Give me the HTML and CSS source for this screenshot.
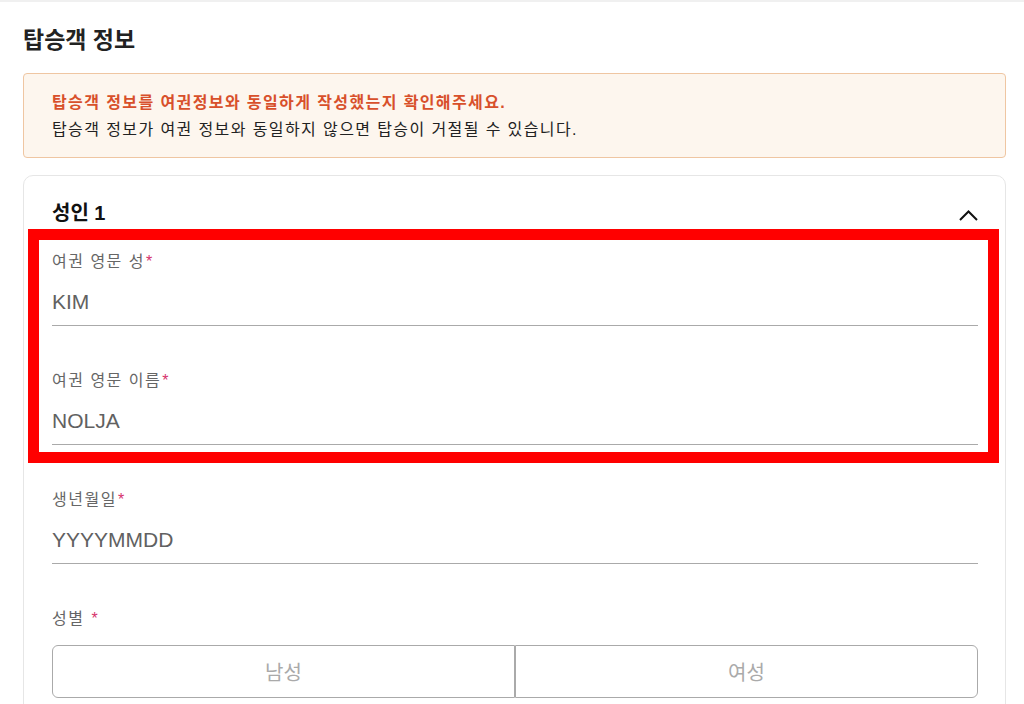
FILE: index.html
```html
<!DOCTYPE html>
<html lang="ko">
<head>
    <meta charset="UTF-8">
    <meta name="viewport" content="width=device-width, initial-scale=1.0">
    <title>탑승객 정보</title>
    <link rel="stylesheet" href="styles.css">
</head>
<body>
    <div class="page">
        <h2 class="section-title">탑승객 정보</h2>

        <div class="notice">
            <p class="notice-warn">탑승객 정보를 여권정보와 동일하게 작성했는지 확인해주세요.</p>
            <p class="notice-text">탑승객 정보가 여권 정보와 동일하지 않으면 탑승이 거절될 수 있습니다.</p>
        </div>

        <div class="card">
            <div class="card-header">
                <h3 class="card-title">성인 1</h3>
                <svg class="chevron" width="19" height="11" viewBox="0 0 19 11">
                    <polyline points="1,10 9.5,1.5 18,10" fill="none" stroke="#111" stroke-width="2"/>
                </svg>
            </div>

            <div class="highlight">
                <div class="field">
                    <label class="field-label" for="lastName">여권 영문 성<span class="req">*</span></label>
                    <input class="field-input" type="text" id="lastName" value="KIM">
                </div>
                <div class="field">
                    <label class="field-label" for="firstName">여권 영문 이름<span class="req">*</span></label>
                    <input class="field-input" type="text" id="firstName" value="NOLJA">
                </div>
            </div>

            <div class="field">
                <label class="field-label" for="birth">생년월일<span class="req">*</span></label>
                <input class="field-input" type="text" id="birth" placeholder="YYYYMMDD">
            </div>

            <div class="field">
                <span class="field-label gender-label">성별 <span class="req">*</span></span>
                <div class="gender-group">
                    <button class="gender-btn">남성</button>
                    <button class="gender-btn">여성</button>
                </div>
            </div>
        </div>
    </div>
</body>
</html>
```

FILE: styles.css
```css
body {
    margin: 0;
    background-color: #fff;
    font-family: "Liberation Sans", "Noto Sans CJK KR", sans-serif;
    color: #222;
}
.page {
    border-top: 2px solid #f0f0f0;
    padding: 0 18px 0 23px;
}
.section-title {
    margin: 24px 0 0;
    font-size: 23px;
    line-height: 28px;
    font-weight: bold;
    color: #222;
}
.notice {
    margin-top: 19px;
    padding: 15px 28px 14px;
    background-color: #fdf6ee;
    border: 1px solid #efc6a2;
    border-radius: 4px;
}
.notice p {
    margin: 0;
    font-size: 16px;
    line-height: 27px;
    letter-spacing: 1.4px;
}
.notice-warn {
    color: #d8502b;
    font-weight: bold;
}
.notice-text {
    color: #222;
}
.card {
    margin-top: 17px;
    padding: 0 27px 0 28px;
    border: 1px solid #e6e6e6;
    border-radius: 10px;
}
.card-header {
    display: flex;
    justify-content: space-between;
    align-items: center;
    padding-top: 24px;
    margin-bottom: 25px;
}
.card-title {
    margin: 0;
    font-size: 20px;
    line-height: 26px;
    font-weight: bold;
    color: #111;
}
.chevron {
    margin-top: 4px;
}
.highlight {
    position: relative;
}
.highlight::before {
    content: "";
    position: absolute;
    top: -22px;
    left: -24px;
    right: -21px;
    bottom: -18px;
    border: 11px solid #ff0000;
    pointer-events: none;
}
.field {
    margin-bottom: 44px;
}
.field-label {
    display: block;
    font-size: 16px;
    line-height: 21px;
    letter-spacing: 1.5px;
    color: #666;
}
.req {
    color: #d6336c;
    margin-left: 1px;
}
.field-input {
    display: block;
    width: 100%;
    box-sizing: border-box;
    margin-top: 8px;
    height: 46px;
    padding: 0 0 1px;
    border: none;
    border-bottom: 1px solid #aaa;
    font-family: "Liberation Sans", "Noto Sans CJK KR", sans-serif;
    font-size: 21px;
    color: #616161;
    background: transparent;
    outline: none;
}
.field-input::placeholder {
    color: #616161;
}
.gender-label {
    margin-bottom: 16px;
}
.gender-group {
    display: flex;
}
.gender-btn {
    flex: 1;
    height: 53px;
    background-color: #fff;
    border: 1px solid #aaa;
    font-family: "Liberation Sans", "Noto Sans CJK KR", sans-serif;
    font-size: 20px;
    color: #aaa;
    cursor: pointer;
}
.gender-btn:first-child {
    border-radius: 6px 0 0 6px;
}
.gender-btn:last-child {
    border-radius: 0 6px 6px 0;
}
```
